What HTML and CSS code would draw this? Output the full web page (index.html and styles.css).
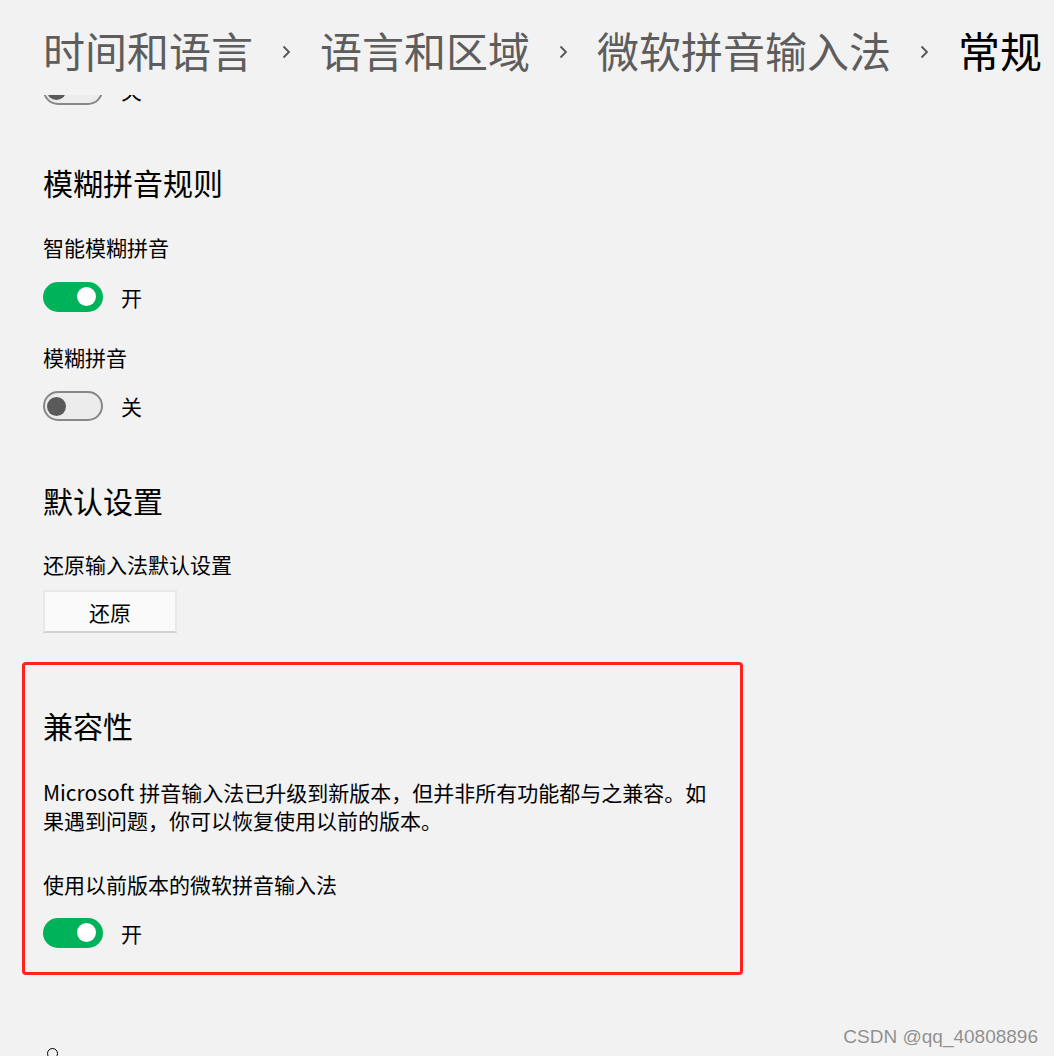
FILE: index.html
```html
<!DOCTYPE html>
<html lang="zh-CN">
<head>
    <meta charset="UTF-8">
    <meta name="viewport" content="width=device-width, initial-scale=1.0">
    <title>常规</title>
    <link rel="stylesheet" href="styles.css">
</head>
<body>

<div class="page">
    <div class="header">
        <span class="crumb">时间和语言</span>
        <svg class="chevron" viewBox="0 0 10 14"><path d="M2.5 1.5 L8 7 L2.5 12.5"/></svg>
        <span class="crumb">语言和区域</span>
        <svg class="chevron" viewBox="0 0 10 14"><path d="M2.5 1.5 L8 7 L2.5 12.5"/></svg>
        <span class="crumb">微软拼音输入法</span>
        <svg class="chevron" viewBox="0 0 10 14"><path d="M2.5 1.5 L8 7 L2.5 12.5"/></svg>
        <span class="crumb current">常规</span>
    </div>

    <div class="main">
        <!-- previous toggle, scrolled under the header -->
        <div class="clip">
            <div class="toggle-row">
                <span class="toggle off"><span class="knob"></span></span>
                <span class="toggle-text">关</span>
            </div>
        </div>

        <h2 class="heading first">模糊拼音规则</h2>
        <div class="label">智能模糊拼音</div>
        <div class="toggle-row">
            <span class="toggle on"><span class="knob"></span></span>
            <span class="toggle-text">开</span>
        </div>
        <div class="label">模糊拼音</div>
        <div class="toggle-row tight">
            <span class="toggle off"><span class="knob"></span></span>
            <span class="toggle-text">关</span>
        </div>

        <h2 class="heading">默认设置</h2>
        <div class="label tight">还原输入法默认设置</div>
        <button class="restore-button">还原</button>

        <div class="compat">
            <h2 class="heading">兼容性</h2>
            <p class="description">Microsoft 拼音输入法已升级到新版本，但并非所有功能都与之兼容。如果遇到问题，你可以恢复使用以前的版本。</p>
            <div class="label">使用以前版本的微软拼音输入法</div>
            <div class="toggle-row">
                <span class="toggle on"><span class="knob"></span></span>
                <span class="toggle-text">开</span>
            </div>
        </div>

        <div class="next-section"><span class="help-icon"></span></div>
    </div>

    <div class="watermark">CSDN @qq_40808896</div>
</div>

</body>
</html>
```

FILE: styles.css
```css
body {
    margin: 0;
    padding: 0;
    background-color: #f2f2f2;
    font-family: "Noto Sans CJK SC", "Noto Sans", sans-serif;
    color: #000;
}

.page {
    position: relative;
    height: 1056px;
    overflow: hidden;
}

.header {
    display: flex;
    align-items: flex-start;
    height: 95px;
    box-sizing: border-box;
    padding: 25px 0 0 43px;
    white-space: nowrap;
}

.crumb {
    font-size: 42px;
    line-height: 50px;
    color: #5d5d5d;
}

.crumb.current {
    color: #000;
}

.chevron {
    width: 10px;
    height: 14px;
    margin: 20px 29px 0 28px;
    fill: none;
    stroke: #555;
    stroke-width: 1.8;
}

.main {
    padding-left: 43px;
}

.clip {
    height: 10px;
    overflow: hidden;
    display: flex;
    flex-direction: column;
    justify-content: flex-end;
}

.heading {
    margin: 59px 0 0 0;
    font-size: 30px;
    line-height: 40px;
    font-weight: normal;
}

.heading.first {
    margin-top: 57px;
}

.label {
    margin-top: 30px;
    font-size: 21px;
    line-height: 30px;
}

.label.tight {
    margin-top: 29px;
}

.toggle-row {
    display: flex;
    align-items: center;
    margin-top: 20px;
    height: 30px;
}

.toggle-row.tight {
    margin-top: 19px;
}

.clip .toggle-row {
    margin-top: 0;
    flex-shrink: 0;
}

.toggle {
    position: relative;
    width: 60px;
    height: 30px;
    box-sizing: border-box;
    border-radius: 15px;
}

.toggle.on {
    background-color: #00b259;
}

.toggle.off {
    background-color: #ececec;
    border: 2px solid #878787;
}

.knob {
    position: absolute;
    width: 19px;
    height: 19px;
    border-radius: 50%;
}

.toggle.on .knob {
    top: 5px;
    right: 7px;
    background-color: #fff;
}

.toggle.off .knob {
    top: 3.5px;
    left: 2px;
    background-color: #5a5a5a;
}

.toggle-text {
    margin-left: 18px;
    font-size: 21px;
    line-height: 30px;
}

.restore-button {
    display: block;
    margin-top: 11px;
    width: 134px;
    height: 43px;
    background-color: #fafafa;
    border: 2px solid #e8e8e8;
    border-bottom-color: #d2d2d2;
    border-radius: 0;
    font-family: inherit;
    font-size: 21px;
    color: #000;
    padding: 0;
}

.compat {
    margin: 29px 0 0 -21px;
    width: 721px;
    box-sizing: border-box;
    padding: 40px 18px 24px 18px;
    border: 3px solid #fe2419;
    border-radius: 4px;
}

.compat .heading {
    margin-top: 0;
}

.description {
    margin: 33px 0 0 0;
    max-width: 670px;
    font-size: 21px;
    line-height: 28px;
}

.compat .label {
    margin-top: 35px;
}

.compat .toggle-row {
    margin-top: 19px;
}

.next-section {
    margin-top: 73px;
    padding-left: 4px;
}

.help-icon {
    display: block;
    width: 9px;
    height: 9px;
    border: 1.5px solid #000;
    border-radius: 50%;
}

.watermark {
    position: absolute;
    top: 1027px;
    right: 16px;
    font-family: "Liberation Sans", Arial, sans-serif;
    font-size: 19px;
    line-height: 19px;
    color: #8f8f8f;
    text-shadow: 0 0 1px #fff;
}
```
